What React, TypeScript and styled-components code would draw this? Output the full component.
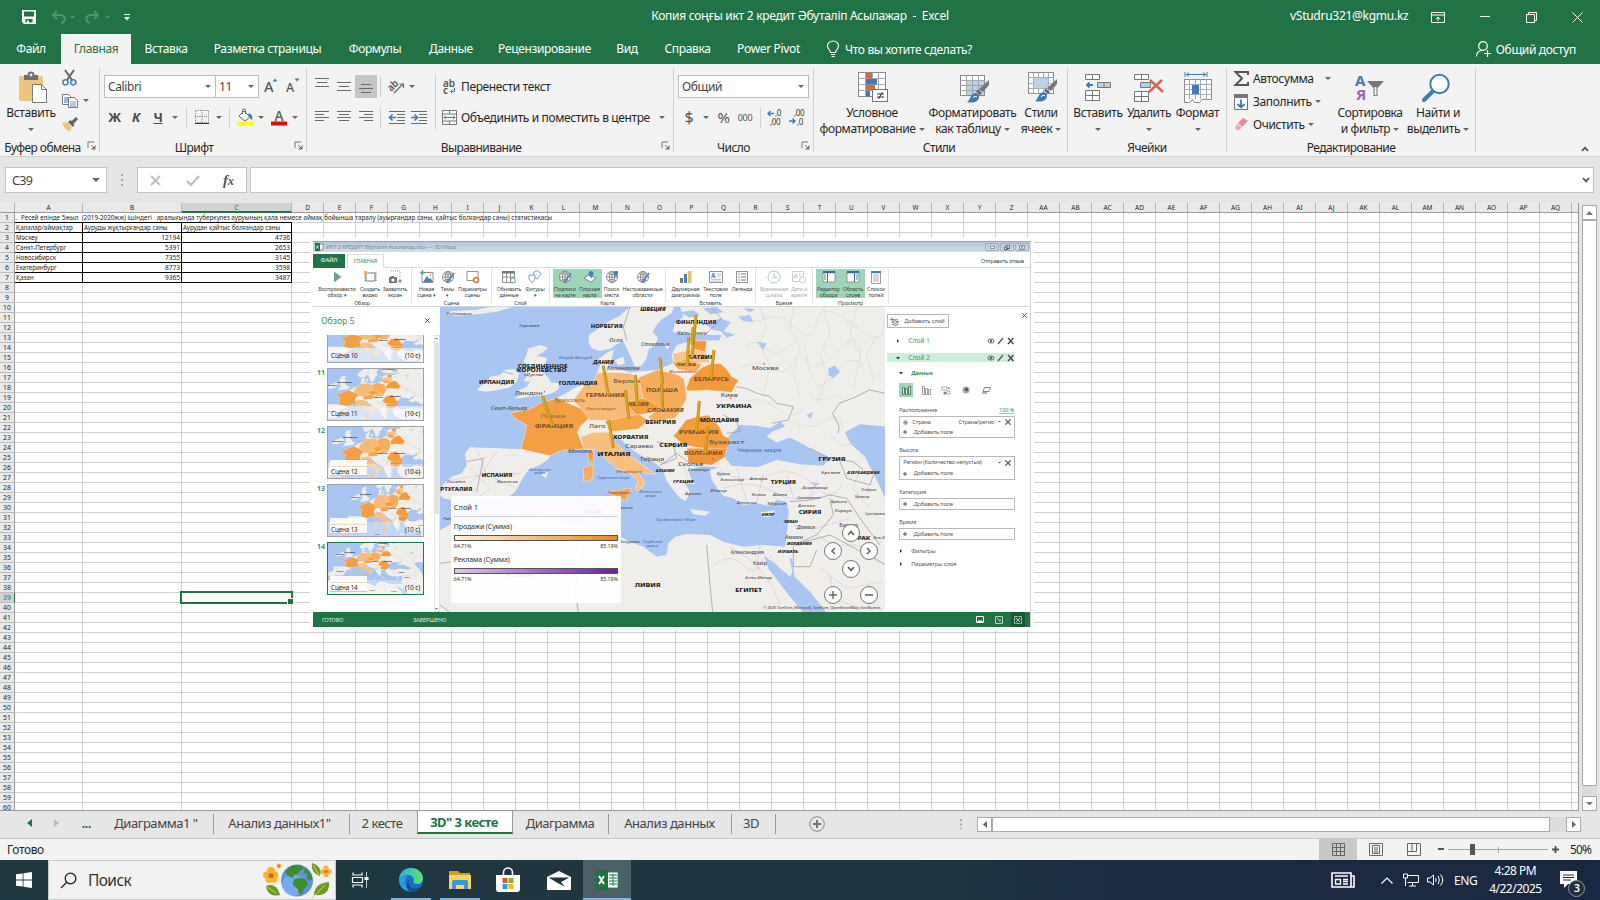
import React from "react";
import styled, { createGlobalStyle, css } from "styled-components";

const GREEN = "#217346";
const INK = "#262626";
const GREY = "#6a6a6a";
const BLUE = "#3f7ab5";
const LINE = "#d0d0d0";

const Global = createGlobalStyle`
  * { box-sizing: border-box; }
  html, body { margin: 0; padding: 0; overflow: hidden; }
  body { font-family: "Noto Sans", "Open Sans", sans-serif; font-size: 12px; color: ${INK}; letter-spacing: -0.38px; }
  svg { display: block; flex: none; overflow: visible; }
`;

const Screen = styled.div`
  width: 1600px;
  height: 900px;
  display: flex;
  flex-direction: column;
  background: #e6e6e6;
  overflow: hidden;
  white-space: nowrap;
`;

/* ---------- title bar and tabs ---------- */

const TitleBar = styled.header`
  height: 34px;
  background: ${GREEN};
  color: #fff;
  display: flex;
  align-items: center;
`;
const QuickBar = styled.div`
  width: 650px;
  padding-left: 22px;
  display: flex;
  align-items: center;
`;
const TitleText = styled.div<{ $w: number; $mr?: number }>`
  width: ${(p) => p.$w}px;
  margin-right: ${(p) => p.$mr ?? 0}px;
  text-align: center;
  line-height: 32px;
  height: 34px;
  letter-spacing: -0.27px;
`;
const WinIcons = styled.div`
  flex: 1;
  display: flex;
  align-items: center;
  height: 30px;
`;
const Gap = styled.span<{ $w: number }>`
  flex: none;
  width: ${(p) => p.$w}px;
`;
const TabBar = styled.nav`
  height: 30px;
  background: ${GREEN};
  color: #fff;
  display: flex;
  align-items: stretch;
  letter-spacing: -0.35px;
`;
const Tab = styled.div<{ $w: number; $on?: boolean }>`
  width: ${(p) => p.$w}px;
  flex: none;
  text-align: center;
  line-height: 30px;
  ${(p) => p.$on && css`background: #f3f3f3; color: ${GREEN};`}
`;
const Tell = styled.div`
  display: flex;
  align-items: center;
  gap: 6px;
  padding-left: 14px;
  flex: 1;
`;
const Share = styled.div`
  display: flex;
  align-items: center;
  gap: 5px;
  padding-right: 24px;
`;

/* ---------- ribbon ---------- */

const Ribbon = styled.section`
  height: 93px;
  background: #f3f3f3;
  border-bottom: 1px solid #d0d0d0;
  display: flex;
  align-items: flex-start;
`;
const Group = styled.div<{ $w: number }>`
  width: ${(p) => p.$w}px;
  flex: none;
  height: 84px;
  margin-top: 4px;
  border-right: 1px solid #d2d2d2;
  display: flex;
  flex-direction: column;
`;
const GroupBody = styled.div`
  height: 70px;
  display: flex;
`;
const GroupFoot = styled.div`
  height: 14px;
  display: flex;
  align-items: center;
  padding-right: 3px;
`;
const GroupName = styled.div<{ $shift?: number }>`
  flex: 1;
  display: flex;
  justify-content: center;
  line-height: 18px;
  padding-top: 6px;
  margin-left: ${(p) => p.$shift ?? 0}px;
  letter-spacing: -0.55px;
`;
const Big = styled.div<{ $w: number; $ml?: number }>`
  width: ${(p) => p.$w}px;
  margin-left: ${(p) => p.$ml ?? 0}px;
  flex: none;
  display: flex;
  flex-direction: column;
  align-items: center;
  padding-top: 3px;
`;
const BigIcon = styled.div<{ $shift?: number }>`
  height: 32px;
  margin: 0 0 2px ${(p) => (p.$shift ?? 0) * 2}px;
  display: flex;
  align-items: center;
`;
const BigLine = styled.div`
  height: 16px;
  line-height: 18px;
  display: flex;
  align-items: center;
  gap: 3px;
`;
const Stack = styled.div<{ $w: number; $pt?: number; $pl?: number }>`
  width: ${(p) => p.$w}px;
  flex: none;
  padding-top: ${(p) => p.$pt ?? 7}px;
  padding-left: ${(p) => p.$pl ?? 0}px;
`;
const ToolRow = styled.div<{ $h: number }>`
  height: ${(p) => p.$h}px;
  display: flex;
  align-items: center;
`;
const Tool = styled.div<{ $w: number; $on?: boolean }>`
  width: ${(p) => p.$w}px;
  height: 23px;
  flex: none;
  display: flex;
  align-items: center;
  justify-content: center;
  ${(p) => p.$on && css`background: #c5c5c5;`}
`;
const Combo = styled.div<{ $w: number }>`
  width: ${(p) => p.$w}px;
  height: 23px;
  flex: none;
  margin-right: -1px;
  background: #fff;
  border: 1px solid #bdbdbd;
  display: flex;
  align-items: center;
  justify-content: space-between;
  padding: 0 4px 0 3px;
  color: #444;
`;
const Rule = styled.i<{ $h: number }>`
  width: 1px;
  height: ${(p) => p.$h}px;
  background: #d2d2d2;
  flex: none;
`;
const Letter = styled.span<{ $kind?: "b" | "i" | "u" }>`
  font-weight: 700;
  font-size: 13px;
  color: #4a4a4a;
  font-style: ${(p) => (p.$kind === "i" ? "italic" : "normal")};
  text-decoration: ${(p) => (p.$kind === "u" ? "underline" : "none")};
`;
const Digits = styled.span<{ $size: number }>`
  font-size: ${(p) => p.$size}px;
  color: #555;
`;
const Collapse = styled.div`
  flex: 1;
  display: flex;
  justify-content: flex-end;
  padding: 82px 11px 0 0;
`;

/* ---------- formula bar ---------- */

const FormulaBar = styled.div`
  height: 46px;
  padding: 10px 6px 0 5px;
  display: flex;
  align-items: flex-start;
`;
const Box = styled.div<{ $w?: number }>`
  ${(p) => (p.$w ? `width: ${p.$w}px;` : "flex: 1;")}
  height: 26px;
  background: #fff;
  border: 1px solid #c3c3c3;
  display: flex;
  align-items: center;
  color: #444;
`;
const NameText = styled.span`
  flex: 1;
  padding-left: 6px;
  font-size: 12.5px;
  letter-spacing: -0.6px;
`;
const Fx = styled.span`
  font: italic 700 15px "Liberation Serif", serif;
  color: #555;
`;
const BoxEnd = styled.div`
  margin-left: auto;
  padding-right: 3px;
`;

/* ---------- sheet ---------- */

const SheetArea = styled.main`
  height: 608px;
  display: flex;
  position: relative;
`;
const Sheet = styled.div`
  width: 1579px;
  height: 608px;
  overflow: hidden;
  border-right: 1px solid #9a9a9a;
  border-bottom: 1px solid #9a9a9a;
`;
const HeadRow = styled.div`
  height: 10px;
  display: flex;
  background: #e9e9e9;
  border-bottom: 1px solid #9c9c9c;
`;
const ColHead = styled.div<{ $w: number; $on?: boolean }>`
  width: ${(p) => p.$w}px;
  flex: none;
  border-right: 1px solid #b5b5b5;
  font-size: 6.5px;
  line-height: 10px;
  height: ${(p) => (p.$on ? 10 : 9)}px;
  letter-spacing: 0;
  text-align: center;
  ${(p) => p.$on && css`background: #d2d2d2; color: ${GREEN}; border-bottom: 2px solid ${GREEN};`}
`;
const Row = styled.div`
  height: 10px;
  display: flex;
`;
const RowHead = styled.div<{ $on?: boolean }>`
  width: 15px;
  flex: none;
  border-right: 1px solid ${(p) => (p.$on ? GREEN : "#9c9c9c")};
  border-bottom: 1px solid #bdbdbd;
  background: ${(p) => (p.$on ? "#d2d2d2" : "#e9e9e9")};
  color: ${(p) => (p.$on ? GREEN : INK)};
  font-size: 6.8px;
  line-height: 9px;
  letter-spacing: 0;
  text-align: center;
`;
const Cell = styled.div<{ $w: number; $dark?: boolean; $num?: boolean }>`
  width: ${(p) => p.$w}px;
  flex: none;
  background: #fff;
  border-right: 1px solid ${(p) => (p.$dark ? "#000" : LINE)};
  border-bottom: 1px solid ${(p) => (p.$dark ? "#000" : LINE)};
  font-size: ${(p) => (p.$num ? 6.6 : 6.2)}px;
  line-height: 9px;
  letter-spacing: 0;
  text-align: ${(p) => (p.$num ? "right" : "left")};
  padding: 0 1px;
  white-space: pre;
`;
const Rest = styled.div`
  flex: 1;
  border-bottom: 1px solid ${LINE};
  background: repeating-linear-gradient(90deg, #fff 0 31px, ${LINE} 31px 32px);
`;
const Overflow = styled.div`
  width: 277px;
  flex: none;
  overflow: visible;
  background: #fff;
  border-bottom: 1px solid #000;
  padding-left: 1px;
  line-height: 9px;
  letter-spacing: -0.01px;
  white-space: pre;
  font-size: 6.3px;
`;
const HeadingText = styled.span`
  position: relative;
  z-index: 1;
`;
const Selection = styled.div`
  position: absolute;
  left: 180px;
  top: 388px;
  width: 113px;
  height: 13px;
  border: 2px solid ${GREEN};
  &::after {
    content: "";
    position: absolute;
    right: -3px;
    bottom: -3px;
    width: 5px;
    height: 5px;
    background: ${GREEN};
    border: 1px solid #fff;
    box-sizing: content-box;
  }
`;
const VScroll = styled.div`
  width: 15px;
  margin: 2px 0 0 3px;
  height: 606px;
  background: #dcdcdc;
  display: flex;
  flex-direction: column;
`;
const ScrollKey = styled.div`
  width: 15px;
  height: 15px;
  flex: none;
  background: #fff;
  border: 1px solid #ababab;
  display: flex;
  align-items: center;
  justify-content: center;
`;
const VThumb = styled.div`
  height: 566px;
  background: #fff;
  border: 1px solid #ababab;
`;

/* ---------- floating 3D Maps window ---------- */

const Shot = styled.div`
  position: absolute;
  left: 310px;
  top: 35px;
  width: 724px;
  height: 392px;
  background: #fff;
  padding: 3px;
  letter-spacing: -0.12px;
`;
const ShotBody = styled.div`
  width: 718px;
  height: 386px;
  border-right: 1px solid #cdd5dc;
  display: flex;
  flex-direction: column;
  font-size: 5.7px;
  color: #444;
`;
const ShotTitle = styled.div`
  height: 11px;
  border-top: 1px solid #98a3ae;
  background: linear-gradient(#b4c6d8, #cfdeed);
  display: flex;
  align-items: center;
  padding-left: 2px;
  color: #8492a0;
  font-size: 5.6px;
`;
const ShotWinBtn = styled.div`
  width: 14px;
  height: 8px;
  margin-right: 1px;
  border: 1px solid #9fb0c2;
  border-radius: 1px;
  display: flex;
  align-items: center;
  justify-content: center;
`;
const ShotTabs = styled.div`
  height: 16px;
  padding-top: 2px;
  display: flex;
  border-bottom: 1px solid #dcdcdc;
  line-height: 13px;
`;
const ShotTab = styled.div<{ $file?: boolean }>`
  width: ${(p) => (p.$file ? 32 : 37)}px;
  margin-right: 2px;
  height: 14px;
  text-align: center;
  font-size: ${(p) => (p.$file ? 6 : 5.4)}px;
  ${(p) =>
    p.$file
      ? css`background: ${GREEN}; color: #fff;`
      : css`background: #fff; color: #3c8a60; border: 1px solid #dcdcdc; border-bottom: none;`}
`;
const ShotFeedback = styled.div`
  margin-left: auto;
  padding: 1px 6px 0 0;
  font-size: 5.4px;
`;
const ShotRibbon = styled.div`
  height: 39px;
  display: flex;
  border-bottom: 1px solid #d5d5d5;
  font-size: 5.4px;
  letter-spacing: -0.15px;
`;
const ShotGroup = styled.div<{ $w: number }>`
  width: ${(p) => p.$w}px;
  flex: none;
  height: 34px;
  margin-top: 1px;
  border-right: 1px solid #e2e2e2;
`;
const ShotGroupItems = styled.div<{ $pl: number }>`
  display: flex;
  height: 29px;
  padding-left: ${(p) => p.$pl}px;
`;
const ShotItem = styled.div<{ $w: number; $on?: boolean; $dim?: boolean }>`
  width: ${(p) => p.$w}px;
  flex: none;
  display: flex;
  flex-direction: column;
  align-items: center;
  padding-top: 1px;
  line-height: 6px;
  text-align: center;
  white-space: pre;
  opacity: ${(p) => (p.$dim ? 0.45 : 1)};
  ${(p) => p.$on && css`background: #9fd5b7;`}
  svg { margin-bottom: 2px; }
`;
const ShotGroupName = styled.div`
  text-align: center;
  line-height: 9px;
  height: 9px;
  padding-top: 1px;
`;
const ShotMain = styled.div`
  height: 305px;
  display: flex;
`;
const TourPane = styled.div`
  width: 127px;
  height: 305px;
  display: flex;
  flex-direction: column;
`;
const TourHead = styled.div`
  height: 28px;
  padding: 5px 10px 0 8px;
  display: flex;
  justify-content: space-between;
  font-size: 8.8px;
  line-height: 18px;
  color: #3f9469;
`;
const TourClose = styled.div`
  padding-top: 6px;
`;
const TourBody = styled.div`
  flex: 1;
  display: flex;
  justify-content: space-between;
  overflow: hidden;
`;
const SceneList = styled.div`
  width: 112px;
  display: flex;
  flex-direction: column;
  justify-content: flex-end;
  gap: 5px;
  padding-bottom: 17px;
`;
const SceneRow = styled.div`
  display: flex;
  height: 53px;
  flex: none;
`;
const SceneNo = styled.div`
  width: 14px;
  text-align: center;
  padding-left: 2px;
  font-size: 7px;
  font-weight: 700;
  line-height: 10px;
  color: #3f9469;
`;
const SceneThumb = styled.div<{ $on?: boolean }>`
  width: 97px;
  height: 53px;
  position: relative;
  border: 1px solid ${(p) => (p.$on ? "#1f7a4a" : "#a2a2a2")};
  outline: ${(p) => (p.$on ? "1px solid #1f7a4a" : "none")};
  outline-offset: -1px;
  overflow: hidden;
`;
const SceneLegend = styled.div`
  position: absolute;
  left: 2px;
  bottom: 2px;
  width: 37px;
  height: 16px;
  background: linear-gradient(#fff 6px, #f2c48e 6px 7px, #fff 7px);
  border-bottom: 1px solid #b9a0cc;
  opacity: 0.92;
`;
const SceneCaption = styled.div<{ $haze?: boolean }>`
  position: absolute;
  left: 0;
  right: 0;
  bottom: 0;
  height: 14px;
  padding: 0 3px;
  display: flex;
  justify-content: space-between;
  align-items: center;
  font-size: 6.3px;
  color: #222;
  background: rgba(255, 255, 255, ${(p) => (p.$haze ? 0.55 : 0.3)});
`;
const TourScroll = styled.div`
  width: 6px;
  height: 277px;
  background: #fff;
  border: 1px solid #e0e0e0;
  display: flex;
  flex-direction: column;
  justify-content: space-between;
  align-items: center;
  padding: 2px 0;
`;
const TourTrack = styled.div`
  width: 6px;
  flex: 1;
  margin: 2px 0 94px;
  background: #e4e4e4;
`;
const MapPane = styled.div`
  width: 446px;
  height: 305px;
  position: relative;
  overflow: hidden;
`;
const Legend = styled.div`
  position: absolute;
  left: 11px;
  top: 189px;
  width: 170px;
  height: 107px;
  padding: 5px 3px 0;
  background: rgba(255, 255, 255, 0.93);
  color: #333;
`;
const LegendTitle = styled.div`
  height: 16px;
  font-size: 7.6px;
  line-height: 12px;
  border-bottom: 1px solid #d0d0d0;
  margin-bottom: 4px;
`;
const LegendName = styled.div`
  font-size: 7px;
  line-height: 12px;
  height: 14px;
`;
const LegendBar = styled.div<{ $from: string; $to: string }>`
  height: 6px;
  border: 1px solid #555;
  background: linear-gradient(90deg, ${(p) => p.$from}, ${(p) => p.$to});
`;
const LegendScale = styled.div`
  display: flex;
  justify-content: space-between;
  font-size: 5.4px;
  line-height: 10px;
  height: 13px;
`;
const Nav = styled.div<{ $x: number; $y: number }>`
  position: absolute;
  left: ${(p) => p.$x}px;
  top: ${(p) => p.$y}px;
  width: 18px;
  height: 18px;
  border-radius: 50%;
  border: 1px solid #777;
  background: #fff;
  display: flex;
  align-items: center;
  justify-content: center;
`;
const Credit = styled.div`
  position: absolute;
  right: 5px;
  bottom: 1px;
  font-size: 4px;
  line-height: 7px;
  color: #333;
`;
const LayerPane = styled.div`
  width: 145px;
  padding: 6px 3px 0 2px;
  font-size: 5.8px;
  color: #555;
`;
const LayerTop = styled.div`
  display: flex;
  justify-content: space-between;
  height: 23px;
`;
const AddLayer = styled.div`
  width: 62px;
  height: 14px;
  margin-top: 1px;
  border: 1px solid #b5b5b5;
  display: flex;
  align-items: center;
  gap: 5px;
  padding-left: 2px;
`;
const LayerRow = styled.div<{ $on?: boolean }>`
  width: 127px;
  height: 9px;
  margin-bottom: 8px;
  padding: 0 0 0 9px;
  display: flex;
  align-items: center;
  gap: 2px;
  background: ${(p) => (p.$on ? "#cdeedd" : "transparent")};
`;
const LayerName = styled.span`
  flex: 1;
  padding-left: 6px;
  font-size: 6.8px;
  color: #4a9c74;
`;
const SubHead = styled.div<{ $green?: boolean; $mb?: number }>`
  height: 9px;
  margin: ${(p) => (p.$green ? -2 : 0)}px 0 ${(p) => p.$mb ?? 4}px;
  padding-left: 12px;
  display: flex;
  align-items: center;
  gap: 8px;
  ${(p) => p.$green && css`color: #2a9461; font-weight: 700; font-size: 5.4px;`}
`;
const ShapeRow = styled.div`
  display: flex;
  gap: 6px;
  padding-left: 12px;
  height: 14px;
  margin-bottom: 9px;
`;
const ShapeBtn = styled.div<{ $on?: boolean }>`
  width: 14px;
  height: 14px;
  display: flex;
  align-items: center;
  justify-content: center;
  ${(p) => p.$on && css`background: #9fd5b7;`}
`;
const FieldName = styled.div`
  width: 127px;
  padding-left: 12px;
  height: 10px;
  line-height: 9px;
  display: flex;
  justify-content: space-between;
  font-size: 5.6px;
  a { color: #2c79bd; border-bottom: 1px solid #9bc0e0; height: 8px; }
`;
const FieldBox = styled.div<{ $h: number; $mb: number }>`
  width: 116px;
  height: ${(p) => p.$h}px;
  margin: 0 0 ${(p) => p.$mb}px 12px;
  border: 1px solid #b9b9b9;
  display: flex;
  flex-direction: column;
  justify-content: space-around;
  font-size: 5.6px;
`;
const FieldRow = styled.div`
  display: flex;
  align-items: center;
  gap: 4px;
  padding: 0 3px;
  line-height: 9px;
`;
const Grow = styled.span`
  flex: 1;
`;
const ShotStatus = styled.div`
  height: 15px;
  background: ${GREEN};
  color: #e6f1ea;
  display: flex;
  align-items: center;
  padding-left: 9px;
  font-size: 5.6px;
`;
const StatusWord = styled.span<{ $w: number }>`
  width: ${(p) => p.$w}px;
`;
const StatusKey = styled.div<{ $on?: boolean }>`
  width: 14px;
  height: 15px;
  margin-right: 5px;
  display: flex;
  align-items: center;
  justify-content: center;
  background: ${(p) => (p.$on ? "#175a35" : "transparent")};
`;

/* ---------- sheet tabs, status bar ---------- */

const SheetTabs = styled.div`
  height: 28px;
  border-bottom: 1px solid #c6c6c6;
  display: flex;
  align-items: flex-start;
  font-size: 13px;
  letter-spacing: -0.46px;
  color: #444;
`;
const SheetNav = styled.div`
  width: 101px;
  height: 27px;
  padding: 0 10px 3px 27px;
  display: flex;
  align-items: center;
  justify-content: space-between;
  color: ${GREEN};
  font-weight: 700;
`;
const SheetTab = styled.div<{ $w: number; $on?: boolean; $bare?: boolean; $trim?: number }>`
  width: ${(p) => p.$w}px;
  flex: none;
  text-align: center;
  padding-right: ${(p) => p.$trim ?? 2}px;
  ${(p) =>
    p.$on
      ? css`
          height: 24px;
          line-height: 25px;
          background: #fff;
          color: ${GREEN};
          font-weight: 700;
          letter-spacing: -0.55px;
          border: solid #9a9a9a;
          border-width: 0 1px;
          border-bottom: 2px solid ${GREEN};
          margin-top: -1px;
        `
      : css`
          height: 20px;
          line-height: 19px;
          margin-top: 3px;
          border-right: 1px solid ${p.$bare ? "transparent" : "#9a9a9a"};
        `}
`;
const HScroll = styled.div`
  height: 15px;
  margin-top: 6px;
  width: 604px;
  background: #dcdcdc;
  display: flex;
`;
const HThumb = styled.div`
  width: 558px;
  height: 15px;
  background: #fff;
  border: 1px solid #ababab;
`;
const TabCenter = styled.div<{ $w: number; $pl?: number }>`
  width: ${(p) => p.$w}px;
  height: 26px;
  padding-left: ${(p) => p.$pl ?? 0}px;
  display: flex;
  align-items: center;
`;
const StatusBar = styled.footer`
  height: 21px;
  background: #f3f3f3;
  display: flex;
  align-items: center;
  padding: 0 2px 1px 7px;
`;
const ViewBtn = styled.div<{ $on?: boolean; $w: number }>`
  width: ${(p) => p.$w}px;
  height: 21px;
  margin-bottom: -1px;
  display: flex;
  align-items: center;
  justify-content: center;
  background: ${(p) => (p.$on ? "#c8c8c8" : "transparent")};
`;
const Percent = styled.span`
  width: 28px;
  letter-spacing: -0.85px;
`;

/* ---------- taskbar ---------- */

const TaskBar = styled.div`
  height: 40px;
  background: linear-gradient(90deg, #1f3840 0%, #20363f 55%, #1b2c42 70%, #1a2740 100%);
  display: flex;
  color: #fff;
`;
const TaskBtn = styled.div<{ $w: number; $open?: boolean; $active?: boolean }>`
  width: ${(p) => p.$w}px;
  flex: none;
  height: 40px;
  display: flex;
  align-items: center;
  justify-content: center;
  background: ${(p) => (p.$active ? "#4c6067" : "transparent")};
  ${(p) =>
    (p.$open || p.$active) &&
    css`
      background-image: linear-gradient(#76b9ed, #76b9ed);
      background-repeat: no-repeat;
      background-position: center bottom;
      background-size: ${p.$active ? 48 : 40}px 2px;
    `}
`;
const Search = styled.div`
  width: 288px;
  background: #f2f2f2;
  border: 1px solid #c5c9cb;
  display: flex;
  align-items: center;
  padding-left: 11px;
  font-size: 15.5px;
  letter-spacing: -0.6px;
  color: #333;
`;
const SearchWord = styled.span`
  flex: 1;
  padding-left: 11px;
`;
const Clock = styled.div`
  width: 66px;
  text-align: center;
  line-height: 18px;
  padding-right: 2px;
  letter-spacing: -0.5px;
`;
const Tray = styled.div`
  flex: 1;
  display: flex;
  align-items: center;
`;
const Notice = styled.div`
  position: relative;
  width: 17px;
  height: 17px;
  margin-top: -2px;
`;
const Badge = styled.div`
  position: absolute;
  right: -8px;
  bottom: -9px;
  width: 17px;
  height: 17px;
  border-radius: 50%;
  border: 1px solid #8d97a3;
  background: #252f3a;
  font-size: 10.5px;
  font-weight: 600;
  line-height: 15px;
  text-align: center;
`;

/* ---------- small icons ---------- */

const Caret = ({ c = "#666", w = 6 }: { c?: string; w?: number }) => (
  <svg width={w} height={w / 2} viewBox="0 0 6 3"><path d="M0 0h6L3 3z" fill={c} /></svg>
);
const Chevron = ({ up, c = "#555" }: { up?: boolean; c?: string }) => (
  <svg width="8" height="6" viewBox="0 0 8 6"><path d={up ? "M1 5l3-3.400L7 5" : "M1 1l3 3.400L7 1"} fill="none" stroke={c} strokeWidth="1.800" /></svg>
);
const Launcher = () => (
  <svg width="9" height="9" viewBox="0 0 9 9"><path d="M1 7V1h6" fill="none" stroke="#777" /><path d="M4 4l3 3" stroke="#777" /><path d="M8.500 4v4.500H4z" fill="#777" /></svg>
);
const Lines = ({ rows, w = 14, h = 13 }: { rows: [number, number, number][]; w?: number; h?: number }) => (
  <svg width={w} height={h}>{rows.map(([x, y, l], i) => <rect key={i} x={x} y={y} width={l} height="1" fill={GREY} />)}</svg>
);
const SaveIcon = () => (
  <svg width="14" height="14" viewBox="0 0 14 14"><path d="M0 0h14v14H2l-2-2z" fill="#fff" /><path d="M2 1.500h10v5H2zM3.500 9h7v3.500h-7z" fill={GREEN} /><path d="M5 10.500h2V13H5z" fill="#fff" /></svg>
);
const Undo = ({ flip }: { flip?: boolean }) => (
  <svg width="15" height="14" viewBox="0 0 15 14"><g transform={flip ? "matrix(-1 0 0 1 15 0)" : undefined} fill="none" stroke="#4f9470" strokeWidth="2"><path d="M6 1L2 5l4 4M2 5h7c6 0 6 7 1 8" /></g></svg>
);
const PasteIcon = () => (
  <svg width="29" height="31" viewBox="0 0 29 31">
    <rect x="1" y="4" width="24" height="25" rx="1.500" fill="#ecc57f" />
    <path d="M6 3h3.500a3.500 3.500 0 0 1 7 0H20v5H6z" fill="#707070" /><circle cx="13" cy="3" r="1.400" fill="#f3f3f3" />
    <path d="M14.500 12.500h9l5 5v13h-14z" fill="#fff" stroke="#777" /><path d="M23.500 12.500v5h5" fill="none" stroke="#777" />
  </svg>
);
const Scissors = () => (
  <svg width="15" height="16" viewBox="0 0 15 16"><path d="M3 0l7 10M12 0L5 10" stroke="#666" strokeWidth="2" /><circle cx="3.500" cy="12.300" r="2.600" fill="none" stroke={BLUE} strokeWidth="1.400" /><circle cx="11.300" cy="12.300" r="2.600" fill="none" stroke={BLUE} strokeWidth="1.400" /></svg>
);
const CopyIcon = () => (
  <svg width="16" height="14" viewBox="0 0 16 14"><path d="M.5.5h6l2 2v8h-8z" fill="#fff" stroke="#777" /><path d="M2 4h4M2 6h4M2 8h4" stroke={BLUE} /><path d="M6.500 3.500h6l3 3v7h-9z" fill="#fff" stroke="#777" /><path d="M8 8h6M8 10h6M8 12h6" stroke={BLUE} strokeWidth=".8" /></svg>
);
const Painter = () => (
  <svg width="16" height="15" viewBox="0 0 16 15"><path d="M0 7l5-1 5 5-2 4c-3 0-6-3-8-8z" fill="#ecc57f" /><path d="M6 6l5 5 1.500-2-1-1L16 3l-2-2-4.500 4-1-1z" fill="#666" /></svg>
);
const FontSize = ({ up }: { up?: boolean }) => (
  <svg width="14" height="19" viewBox="0 0 14 19"><text x="0" y="14.500" fontSize={up ? 14.5 : 12.5} letterSpacing="0" fontWeight="500" fill="#555">A</text><path d={up ? "M8.500 4.500l2.500-3 2.500 3z" : "M8.500 1.500h5l-2.500 3z"} fill={BLUE} /></svg>
);
const BordersIcon = () => (
  <svg width="14" height="14" viewBox="0 0 14 14"><path d="M.5.5h13v12H.5zM7 0v13M0 6.500h13" fill="none" stroke="#777" strokeDasharray="1 1.200" /><path d="M0 13.500h14" stroke="#333" /></svg>
);
const FillIcon = () => (
  <svg width="17" height="17" viewBox="0 0 17 17"><path d="M7 2l6 6-5 4-6-5z" fill="#fff" stroke="#666" /><path d="M5.500 5V1.500a1.500 1.500 0 0 1 3 0V5" fill="none" stroke="#666" /><path d="M11 4.500c4 0 5 3 4 7-1-2-2-3-3-3z" fill={BLUE} /><rect y="12.500" width="16" height="4" fill="#ff0" /></svg>
);
const FontColor = () => (
  <svg width="16" height="17" viewBox="0 0 16 17"><text x="8" y="11.500" textAnchor="middle" fontSize="13.500" letterSpacing="0" fontWeight="600" fill="#666">A</text><rect y="12.500" width="16" height="4" fill="#e00b0b" /></svg>
);
const Orient = () => (
  <svg width="16" height="15" viewBox="0 0 16 15"><text x="0" y="0" fontSize="10.500" letterSpacing="0" fontWeight="600" fill="#555" transform="translate(2 9) rotate(-45) scale(.9 1) translate(-3 3)">ab</text><path d="M5 14L14 5M10.500 5H14.500V9" fill="none" stroke="#666" strokeWidth="1.200" /></svg>
);
const WrapIcon = () => (
  <svg width="13" height="16" viewBox="0 0 13 16"><text x="0" y="7.500" fontSize="10" letterSpacing="0" fontWeight="600" fill="#555">ab</text><text x="0" y="15" fontSize="10" letterSpacing="0" fontWeight="600" fill="#555">c</text><path d="M11.500 9v3.500H7.500M9.500 10.500l-2 2 2 2" fill="none" stroke={BLUE} /></svg>
);
const MergeIcon = () => (
  <svg width="15" height="15" viewBox="0 0 15 15"><path d="M.5.5h14v14H.5zM.5 4h14M.5 11h14M7.500.5V4M7.500 11v3.500" fill="#fff" stroke="#777" /><path d="M2 7.500h11M4 5.500l-2 2 2 2M11 5.500l2 2-2 2" fill="none" stroke={BLUE} /></svg>
);
const Indent = ({ right }: { right?: boolean }) => (
  <svg width="16" height="13" viewBox="0 0 16 13"><path d="M0 .5h16M8 3.500h8M8 6.500h8M8 9.500h8M0 12.500h16" stroke={GREY} /><path d={right ? "M0 6.500h6M3.500 3.500l3 3-3 3" : "M7 6.500H1M3.500 3.500l-3 3 3 3"} fill="none" stroke={BLUE} strokeWidth="1.700" /></svg>
);
const Decimal = ({ more }: { more?: boolean }) => (
  <svg width="16" height="15" viewBox="0 0 16 15" fontSize="8" fill="#333" letterSpacing="-0.300">
    <text x={more ? 8 : 5} y="6">{more ? ",0" : ",00"}</text><text x={more ? 3 : 8} y="14.500">{more ? ",00" : ",0"}</text>
    <path d={more ? "M7 3.500H1M3.500 1L1 3.500 3.500 6" : "M0 11h6M3.500 8.500L6 11l-2.500 2.500"} fill="none" stroke={BLUE} strokeWidth="1.400" />
  </svg>
);
const TableGrid = ({ w, h, cols, rows }: { w: number; h: number; cols: number; rows: number }) => (
  <g fill="#fff" stroke="#8a8a8a">
    <rect x=".5" y=".5" width={w} height={h} />
    {Array.from({ length: cols - 1 }, (_, i) => <path key={"c" + i} d={`M${Math.round(((i + 1) * w) / cols) + 0.5} .5v${h}`} stroke="#aaa" />)}
    {Array.from({ length: rows - 1 }, (_, i) => <path key={"r" + i} d={`M.5 ${Math.round(((i + 1) * h) / rows) + 0.5}h${w}`} stroke="#aaa" />)}
  </g>
);
const BrushTip = ({ x, y }: { x: number; y: number }) => (
  <g transform={`translate(${x} ${y})`}><path d="M22 0v5l-6 7-4-3z" fill="#777" /><path d="M11 9.500l4 3.500-2 2-4-3.500z" fill="#666" /><path d="M0 22c3-1 3-8 8-9 4 0 5 4 3 7-3 3-7 3-11 2z" fill={BLUE} /><path d="M6 18c1-2 3-2 4-1" stroke="#fff" fill="none" /></g>
);
const CondIcon = () => (
  <svg width="31" height="31" viewBox="0 0 31 31"><TableGrid w={27} h={24} cols={4} rows={4} /><rect x="8" y="1" width="6" height="5.500" fill="#d6654a" /><rect x="8" y="7" width="11" height="5.500" fill={BLUE} /><rect x="8" y="13" width="9" height="5.500" fill="#d6654a" /><rect x="8" y="19" width="4" height="5.500" fill={BLUE} /><rect x="14.500" y="17.500" width="15" height="12" fill="#fff" stroke="#777" /><path d="M19 22h7M19 25h7M24.500 20l-4 7" stroke="#333" /></svg>
);
const TableIcon = () => (
  <svg width="30" height="31" viewBox="0 0 30 31"><g transform="translate(0 3)"><TableGrid w={24} h={20} cols={4} rows={4} /><rect x="7" y="6" width="17" height="14" fill="#7f9fc4" opacity=".5" /></g><BrushTip x={7} y={8} /></svg>
);
const StyleIcon = () => (
  <svg width="30" height="31" viewBox="0 0 30 31"><TableGrid w={25} h={21} cols={5} rows={4} /><rect x="5.500" y="5.500" width="15" height="11" fill="#bfd0e6" stroke="#9ab0cc" /><BrushTip x={7} y={7} /></svg>
);
const InsertIcon = () => (
  <svg width="27" height="29" viewBox="0 0 27 29" fill="#fff" stroke="#777"><path d="M.5 1.500h14v5H.500zM7.500 1.500v5M.5 17.500h14v10H.5zM7.500 17.500v10M.5 22.500h14" /><path d="M12.500 9.500h13v5h-13zM19 9.500v5" fill="#bdd0e0" /><path d="M8 12H2M4.500 9.500L2 12l2.500 2.500" fill="none" stroke={BLUE} strokeWidth="1.800" /></svg>
);
const DeleteIcon = () => (
  <svg width="30" height="29" viewBox="0 0 30 29" fill="#fff" stroke="#777"><path d="M.5 1.500h14v5H.500zM7.500 1.500v5M.5 18.500h14v10H.5zM7.500 18.500v10M.5 23.500h14" /><path d="M6.500 9.500h10v5h-10z" fill="#bdd0e0" /><path d="M16 7l13 12M28 7L15 19" fill="none" stroke="#d6654a" strokeWidth="2.400" /></svg>
);
const FormatIcon = () => (
  <svg width="28" height="31" viewBox="0 0 28 31"><path d="M1 0v5M23 0v5M2 2.500h20M5 .500L2.500 2.500 5 4.500M19 .500l2.500 2-2.500 2" fill="none" stroke={BLUE} /><g transform="translate(0 7)"><TableGrid w={27} h={20} cols={5} rows={4} /></g><rect x="8" y="13" width="7" height="9" fill={BLUE} /><path d="M.5 27v3.500h5l3-3 2 3h5l3-3.500" fill="#fff" stroke="#888" /></svg>
);
const Sigma = () => (
  <svg width="15" height="15" viewBox="0 0 15 15"><path d="M14 4V1H1.500L8 7.500 1.500 14H14v-3" fill="none" stroke="#555" strokeWidth="2" /></svg>
);
const FillDown = () => (
  <svg width="14" height="16" viewBox="0 0 14 16"><rect x=".5" y=".5" width="13" height="15" fill="#fff" stroke="#777" /><rect width="14" height="4" fill="#777" /><path d="M7 5.500v8M3.500 10L7 13.500 10.500 10" fill="none" stroke={BLUE} strokeWidth="1.800" /></svg>
);
const Eraser = () => (
  <svg width="13" height="13" viewBox="0 0 13 13"><path d="M8 0l5 3-6 6-4-4z" fill="#e08a9a" /><path d="M2.500 6l4 3.500L4.500 12H1L0 9z" fill="#e9aab6" /></svg>
);
const SortIcon = () => (
  <svg width="30" height="28" viewBox="0 0 30 28"><text x="0" y="13" fontSize="15" letterSpacing="0" fontWeight="700" fill={BLUE}>А</text><text x="1" y="27" fontSize="15" letterSpacing="0" fontWeight="700" fill="#9a62b5">Я</text><path d="M12 8h17l-6.500 7v8h-4v-8z" fill="#777" /><path d="M19.500 14h2v8h-2z" fill="#f3f3f3" /></svg>
);
const FindIcon = () => (
  <svg width="28" height="29" viewBox="0 0 28 29"><path d="M2 27l9-9" stroke={BLUE} strokeWidth="4" strokeLinecap="round" /><circle cx="17.500" cy="11" r="9.200" fill="#fff" stroke={BLUE} strokeWidth="2" /></svg>
);

/* ---------- map drawing ---------- */

const SEA = "#a9c5f1";
const LAND = "#efeeea";

const lands = [
  "405,236 425,228 500,224 540,216 610,216 560,230 500,238 440,243",
  "655,340 690,330 714,338 700,352 680,362 712,368 705,388 690,398 700,412 718,432 722,442 748,445 746,462 728,474 706,480 660,485 612,492 640,474 622,468 650,455 660,440 640,438 655,418 640,410 652,388 640,380 648,362",
  "500,466 515,450 532,440 540,425 570,420 585,405 612,402 628,416 620,440 598,458 560,466 530,470",
  "835,322 838,298 860,285 890,262 925,245 960,216 1092,216 1085,235 1060,250 1040,270 1028,290 1045,310 1035,330 1015,345 1010,370 995,392 975,395 962,365 948,335 940,318 920,328 900,342 870,348 845,340",
  "1088,290 1095,265 1120,245 1110,216 1728,216 1728,1131 390,1131 390,885 430,865 700,850 932,905 960,920 1000,935 1040,965 1070,960 1075,925 1095,905 1130,897 1200,900 1240,920 1300,935 1360,930 1425,935 1432,880 1436,830 1430,800 1400,795 1375,812 1340,805 1300,810 1270,790 1240,782 1222,760 1205,735 1200,705 1230,697 1170,694 1135,705 1142,728 1155,748 1125,745 1140,770 1128,798 1110,790 1090,765 1070,738 1058,702 1030,680 990,660 960,640 935,615 915,600 905,612 950,655 1005,695 1038,718 985,712 1005,745 985,770 975,760 985,738 960,715 920,700 885,670 862,645 820,642 760,645 720,662 716,672 690,690 655,705 635,735 618,768 590,790 540,786 450,800 400,790 390,780 398,750 425,725 455,715 470,690 465,655 480,637 560,640 632,642 645,600 650,570 612,548 602,535 660,522 690,505 740,490 775,470 800,455 850,440 862,412 872,385 865,372 895,350 912,345 905,372 893,395 960,412 1040,405 1090,385 1085,360 1100,330 1145,318 1228,316 1235,300 1150,300",
  "820,698 850,688 848,733 822,740", "832,655 852,648 850,680 838,680", "890,772 965,760 945,796",
  "1140,822 1200,830 1185,842 1150,838", "1352,832 1395,826 1380,846 1360,846", "690,716 715,710 708,730",
  "915,375 940,365 945,385 925,392", "1060,325 1080,330 1072,345",
];
const waters = [
  "1242,665 1240,640 1255,605 1290,570 1340,572 1380,580 1412,560 1425,575 1385,590 1370,605 1400,622 1440,608 1480,628 1520,652 1560,668 1540,692 1470,688 1400,675 1340,697 1265,692",
  "1605,592 1650,568 1728,575 1728,795 1700,735 1665,665 1620,625",
  "1362,962 1390,982 1440,1025 1448,1010 1438,970 1446,972 1454,1025 1500,1070 1548,1131 1478,1131 1420,1060 1375,1000",
  "1190,270 1230,250 1262,262 1240,290 1210,285", "1285,245 1320,240 1330,262 1300,258", "1230,285 1275,300 1250,308",
  "1555,400 1575,392 1590,410 1570,430 1555,420", "1340,320 1370,325 1360,345", "1490,540 1510,530 1502,552",
  "1110,232 1150,226 1170,240 1140,248", "1500,740 1530,746 1515,752", "1180,220 1220,216 1240,232 1200,238", "1300,220 1335,222 1320,232",
];
const tinted: [string, string][] = [
  ["#f3a044", "602,535 660,522 690,505 740,490 800,515 832,530 835,552 812,572 802,592 822,642 760,645 720,662 632,642 645,600 650,570 612,548"],
  ["#f7bb79", "790,495 820,455 850,440 862,415 880,412 960,415 985,428 1000,490 955,500 985,540 940,556 840,556 815,525"],
  ["#f6ac5c", "985,428 1040,405 1100,418 1122,432 1130,490 1108,532 1050,520 1000,490"],
  ["#f49b3a", "945,502 1000,490 1052,516 1030,532 980,540"],
  ["#f5a549", "880,560 985,538 1015,556 985,582 900,590"],
  ["#f6b168", "1015,545 1050,520 1108,532 1095,550 1025,560"],
  ["#f39739", "1146,318 1190,318 1186,352 1150,342"],
  ["#f8c489", "1088,356 1150,342 1186,352 1200,382 1150,385 1090,378"],
  ["#f6ad60", "1086,382 1130,372 1175,388 1160,412 1105,404"],
  ["#f39b3b", "1128,462 1140,430 1160,412 1175,398 1200,388 1230,385 1250,402 1265,425 1286,435 1275,452 1265,472 1190,465 1135,468"],
  ["#f39d3f", "1090,602 1128,555 1160,546 1195,540 1228,575 1240,602 1262,612 1252,640 1180,640 1120,630"],
  ["#f5933a", "1130,640 1252,640 1242,668 1205,690 1135,685"],
  ["#f8bf80", "822,642 812,606 850,592 905,592 905,612 950,655 1005,695 1038,718 985,712 1005,745 985,770 975,760 985,738 960,715 920,700 885,670 862,645"],
  ["#f6ac5c", "820,698 850,688 848,733 822,740"], ["#f39d3f", "832,655 852,648 850,680 838,680"], ["#f3a044", "890,772 965,760 945,796"],
];
const borders = [
  "M1205,220l30,30-40,40-10,10", "M1280,455l30,6 30,14 40,10 20,20 50,10-15,40-50,10", "M1240,540l40,20 10,30-40,5", "M1728,475l-50,-10-40,20-50,20-20,30 20,40-5,20", "M1500,640l60,30 70,10 30,25", "M1590,680l20,50 70,20 10,-30",
  "M1440,800l60,-5 60,-15 50,10 40,60 60,80", "M1560,790l10,50-50,60-70,30", "M1450,930l110,-30 168,90", "M1190,930l10,120 8,80", "M1450,935v60l50,0 20,-50", "M960,216l-20,60 10,40", "M390,1110l40,30", "M390,985l150,-20", "M805,1131l-10,-60 30,-150", "M470,680l50,-10-20,100", "M1010,665l50,20 40,-30 40,30", "M1040,620l50,10 10,40-50,20", "M580,410l30,8",
];
const faint = [
  "M1290,240q40,30 80,10t90,30 60,-20 110,10 90,-10", "M1310,330q30,-20 60,10t70,-10 50,30 90,-10 70,20", "M1290,400q50,-30 90,0t70,-20 50,30 70,10 90,-30", "M1350,216l20,60-20,50 30,70-20,80", "M1450,216l-10,70 30,50-20,80 20,70", "M1540,216l20,80-30,60 20,70-30,80", "M1640,216l-20,80 30,60-20,110", "M1310,500q40,-20 90,20t80,0", "M1500,480q30,30 80,0", "M1700,300l-30,60 20,70", "M1450,560q50,30 90,0t60,20", "M1560,600l30,30 60,-5",
];
const roads = [
  "M1230,710q80,40 150,10t130,30 90,-10", "M1240,760q80,-30 150,10t110,10", "M1280,700l30,100", "M1360,715l-20,90", "M1430,720l20,70", "M1520,735l-20,60", "M480,700l60,60-40,30", "M420,735l100,-15 110,-5", "M500,640l30,80 90,40", "M560,650l-40,60-60,50", "M1350,930l-10,60 50,70 20,50", "M1260,935l60,40 40,40", "M1210,990q50,-40 90,0t60,-20", "M1380,960l40,60", "M1500,880q60,60 110,50t110,60", "M1530,1000l80,60 110,-20", "M1450,870l70,10 100,-30", "M1650,700l-20,60 50,60", "M1560,1020l10,70 80,30", "M560,880q70,-30 150,-10t170,40", "M1120,690l20,60", "M430,1090l80,-40 100,50",
];
type Label = [string, number, number, number, number, ("b" | "c" | "w" | "o")?];
const labels: Label[] = [
  ["Рейкьявик", 447, 239, 76, 11, "c"], ["Торсхавн", 657, 277, 62, 10, "c"], ["ШВЕЦИЯ", 1029, 227, 76, 13], ["НОРВЕГИЯ", 890, 278, 96, 14], ["ФИНЛЯНДИЯ", 1158, 267, 122, 14], ["Хельсинки", 1146, 299, 90, 13, "c"],
  ["Осло", 918, 321, 40, 13, "c"], ["Стокгольм", 1036, 332, 86, 13, "c"], ["Норд-Фьорд", 796, 371, 100, 11, "w"], ["ДАНИЯ", 880, 386, 62, 13], ["Копенгаген", 940, 404, 98, 13, "c"], ["СОЕДИНЕННОЕ", 698, 399, 150, 14], ["КОРОЛЕВСТВО", 695, 411, 150, 14],
  ["Дуглас", 675, 424, 52, 12, "c"], ["ИРЛАНДИЯ", 560, 446, 106, 14], ["ГОЛЛАНДИЯ", 804, 451, 116, 14], ["Берлин", 950, 445, 80, 18, "c"], ["ПОЛЬША", 1056, 471, 96, 16, "b"], ["Лондон", 656, 480, 84, 18, "c"], ["ГЕРМАНИЯ", 886, 487, 118, 16, "b"],
  ["Брюссель", 780, 502, 92, 14, "o"], ["ЧЕХИЯ", 985, 513, 62, 13, "b"], ["Сент-Хельер", 597, 524, 110, 13, "c"], ["Люксембург", 872, 526, 90, 12, "o"], ["СЛОВАКИЯ", 1066, 530, 110, 13, "b"], ["Париж", 730, 550, 76, 18, "o"], ["ФРАНЦИЯ", 732, 579, 116, 15, "b"],
  ["Лаго", 862, 578, 50, 14, "c"], ["ВЕНГРИЯ", 1052, 568, 92, 15], ["ЛАТВИЯ", 1172, 371, 80, 13], ["ЛИТВА", 1128, 394, 60, 12, "b"], ["Вильнюс", 1118, 413, 80, 12, "o"], ["БЕЛАРУСЬ", 1204, 437, 106, 14, "b"], ["Москва", 1366, 405, 80, 16, "c"], ["Киев", 1258, 485, 52, 15, "c"],
  ["УКРАИНА", 1272, 518, 106, 15], ["МОЛДАВИЯ", 1228, 561, 118, 14], ["РУМЫНИЯ", 1166, 598, 120, 16, "b"], ["Бухарест", 1250, 626, 106, 18, "c"], ["Черное море", 1348, 652, 132, 14, "w"], ["БОЛГАРИЯ", 1180, 660, 116, 15, "b"], ["ХОРВАТИЯ", 962, 612, 106, 14],
  ["Сараево", 988, 638, 84, 16, "c"], ["СЕРБИЯ", 1090, 635, 84, 15], ["Тирана", 1026, 677, 74, 17, "c"], ["Скопье", 1142, 692, 76, 16, "c"], ["Монако", 810, 655, 72, 13, "c"], ["ИТАЛИЯ", 912, 662, 100, 16], ["Неаполь", 958, 713, 78, 12, "o"], ["Тирренское море", 910, 732, 98, 10, "w"], ["Палермо", 928, 776, 72, 12, "o"],
  ["Ионическое", 1022, 774, 70, 10, "w"], ["море", 1022, 786, 34, 10, "w"], ["ГРЕЦИЯ", 1120, 745, 62, 12], ["Афины", 1150, 780, 50, 12, "c"], ["АЛБАНИЯ", 1065, 710, 56, 9], ["Балеарское", 690, 707, 64, 10, "w"], ["море", 690, 718, 34, 10, "w"], ["ИСПАНИЯ", 561, 726, 92, 14], ["Валенсия", 592, 743, 62, 11, "c"], ["Лиссабон", 438, 744, 56, 11, "c"], ["ПОРТУГАЛИЯ", 425, 768, 124, 14],
  ["Рабат", 420, 856, 40, 12, "c"], ["АЛЖИР", 630, 1025, 82, 16], ["ТУНИС", 850, 836, 64, 13], ["Мальта", 945, 822, 46, 11, "c"], ["Средиземное Море", 1098, 858, 120, 10, "w"], ["Мисурата", 958, 924, 62, 12, "c"], ["Сирдский", 1028, 924, 60, 11, "w"], ["залив", 1026, 936, 36, 11, "w"], ["ЛИВИЯ", 1013, 1057, 78, 18],
  ["ГРУЗИЯ", 1566, 677, 82, 14], ["АЗЕРБАЙДЖАН", 1660, 717, 98, 11], ["Ереван", 1562, 718, 56, 12, "c"], ["ТУРЦИЯ", 1420, 747, 76, 15], ["Анкара", 1346, 736, 54, 12, "c"], ["Бурса", 1240, 719, 40, 11, "c"], ["Эскишехир", 1266, 738, 72, 11, "c"], ["Стамбул", 1166, 708, 66, 10, "c"], ["Измир", 1226, 771, 50, 12, "c"], ["Конья", 1346, 784, 42, 12, "c"], ["Адана", 1410, 784, 42, 12, "c"],
  ["Анталья", 1310, 807, 58, 12, "c"], ["Мерсин", 1400, 809, 56, 12, "c"], ["Диярбакыр", 1514, 762, 78, 12, "c"], ["Газиантеп", 1496, 792, 70, 12, "c"], ["Тебриз", 1676, 769, 46, 12, "c"], ["Урмия", 1656, 790, 44, 11, "c"], ["Эрбиль", 1586, 805, 50, 12, "c"], ["Алеппо", 1490, 815, 52, 12, "c"], ["СИРИЯ", 1500, 837, 68, 17], ["Киркук", 1600, 832, 52, 12, "c"], ["КИПР", 1374, 843, 38, 11], ["ЛИВАН", 1442, 864, 42, 11],
  ["Дамаск", 1488, 883, 56, 13, "c"], ["Багдад", 1616, 877, 56, 15, "c"], ["Амман", 1452, 911, 54, 13, "c"], ["ИРАК", 1654, 914, 54, 15], ["Эль-К", 1707, 912, 36, 12, "c"], ["ИОРДАНИЯ", 1468, 931, 74, 10], ["ИЗРАИЛЬ", 1434, 954, 62, 10], ["Александрия", 1312, 956, 100, 14, "c"], ["Каир", 1350, 990, 42, 15, "c"], ["Бени-Мазар", 1346, 1032, 80, 12, "c"], ["ЕГИПЕТ", 1316, 1072, 80, 18], ["Сулеймания", 1696, 840, 60, 11, "c"],
];
const labelFill = { b: "#7d5326", c: "#555", w: "#4f74b8", o: "#a5672a" };
const bars: [number, number, number, number][] = [
  [880, 392, 895, 482], [1050, 368, 1058, 445], [1055, 445, 1058, 522], [976, 420, 982, 510], [946, 465, 957, 552], [1158, 240, 1146, 368], [1136, 306, 1132, 395], [1212, 345, 1203, 432], [698, 484, 728, 572], [896, 555, 910, 638], [1168, 498, 1160, 590], [1194, 575, 1186, 655], [1149, 278, 1146, 330],
];
const cities = [[703, 470], [980, 462], [1262, 490], [1086, 630], [1208, 672], [1174, 686], [1362, 386], [645, 420]];

const EuropeMap = ({ w, h, box, detail }: { w: number; h: number; box: string; detail?: boolean }) => (
  <svg width={w} height={h} viewBox={box} preserveAspectRatio="none">
    <rect x="-400" y="-400" width="3000" height="2600" fill={SEA} />
    {!detail && <polygon points="1110,217 1110,-300 2400,-300 2400,2200 -300,2200 -300,1050 391,885 391,1130 1727,1130 1727,217" fill={LAND} />}
    {lands.map((p) => <polygon key={p} points={p} fill={LAND} />)}
    {waters.map((p) => <polygon key={p} points={p} fill={SEA} />)}
    <g fill="none" stroke="#d6d3d6" strokeWidth="1.500">{faint.map((d) => <path key={d} d={d} />)}</g>
    <g fill="none" stroke="#dcc6e0" strokeWidth="2">{roads.map((d) => <path key={d} d={d} />)}</g>
    {tinted.map(([f, p]) => <polygon key={p} points={p} fill={f} stroke="#fff" strokeWidth="1.400" strokeDasharray="5 3" />)}
    <polygon points="812,572 842,558 885,560 895,575 860,592 815,590" fill={LAND} />
    <polygon points="1010,568 1095,550 1125,560 1095,598 1035,600" fill={LAND} />
    <g fill="none" stroke="#999" strokeWidth="2.200">{borders.map((d) => <path key={d} d={d} />)}</g>
    {detail && <g fill="#c33">{cities.map(([x, y]) => <circle key={x} cx={x} cy={y} r="2.200" />)}</g>}
    {labels.map(([t, x, y, len, s, k], i) => {
      if (!detail && (k || i % 2)) return null;
      const soft = k && k !== "b";
      return (
        <text key={i} x={x - len / 2} y={y} fontSize={s} textLength={len} lengthAdjust="spacingAndGlyphs" letterSpacing="0" fontWeight={soft ? 500 : 800} fontStyle={s < 14 ? "italic" : "normal"} fill={k ? labelFill[k] : "#222"}>{t}</text>
      );
    })}
    {detail && bars.map(([x1, y1, x2, y2]) => (
      <g key={`${x1}-${y1}`}>
        <path d={`M${x1} ${y1}L${x2} ${y2}`} stroke="#bb8c16" strokeWidth="9" />
        <path d={`M${x1 - 1} ${y1}L${x2 - 1} ${y2}`} stroke="#dba820" strokeWidth="5" />
      </g>
    ))}
  </svg>
);

/* ---------- icons inside the 3D Maps window ---------- */

type Kind = "play" | "film" | "camera" | "image" | "globe" | "gear" | "table" | "shapes" | "flat" | "pin" | "chart" | "textbox" | "list" | "clock" | "date" | "pane" | "side" | "fields";
const MiniIcon = ({ kind }: { kind: Kind }) => {
  const g = "#777";
  const b = "#4a7fbd";
  const globe = <g fill="#fff" stroke={g} strokeWidth=".8"><circle cx="7" cy="7" r="5.500" /><path d="M1.500 7h11M7 1.500v11M3 3.500q4 2.500 8 0M3 10.500q4-2.500 8 0" fill="none" /><ellipse cx="7" cy="7" rx="2.600" ry="5.500" fill="none" /></g>;
  const art: Record<Kind, React.ReactNode> = {
    play: <path d="M4 1.500l7.500 5.500L4 12.500z" fill="#6aa58a" />,
    film: <g fill="none" stroke={g}><path d="M3 3h9v8H3z" /><path d="M2 2v10M13 2v10" strokeDasharray="1 1" /><path d="M1 1h3v3H1z" fill="#f0b44c" stroke="none" /></g>,
    camera: <g><path d="M3 1h9v7" fill="none" stroke={g} strokeWidth=".7" strokeDasharray="1 1" /><path d="M1 7h8v6H1zM3 6h3v1H3z" fill={g} /><circle cx="5" cy="10" r="1.600" fill="#fff" /><path d="M10 11h4M12 9v4" stroke={b} /></g>,
    image: <g><path d="M2 2.500h11v10H2z" fill="#fff" stroke={g} strokeWidth=".8" /><path d="M3 12l4-6 2 3 1.500-1L13 12z" fill={b} /><path d="M0 2.500h5M2.500 0v5" stroke="#5a9f7b" strokeWidth="1.400" /><circle cx="10.500" cy="4.800" r="1.100" fill="#f0b44c" /></g>,
    globe: <g>{globe}<path d="M13 3l-5 7-2 2" stroke={b} strokeWidth="1.500" fill="none" /></g>,
    gear: <g><path d="M1 1.500h11v9H1z" fill="#fff" stroke={g} strokeWidth=".8" /><circle cx="10" cy="10" r="2.500" fill="#fff" stroke="#df7a36" strokeWidth="1.700" /></g>,
    table: <g><path d="M.5 1.500h12v11H.5zM4.500 2v10M8.500 2v10M.5 7h12" fill="#fff" stroke={g} strokeWidth=".8" /><path d="M0 1h13v2.500H0z" fill="#777" /><circle cx="11" cy="10.500" r="2.500" fill="#fff" stroke="#4fa07b" /></g>,
    shapes: <g fill="#fff" stroke="#7fa3cf"><path d="M6 2q4-3 7 2L9 9 5 6z" /><path d="M1 5h6v4l-3 4-3-4z" /></g>,
    flat: <g><path d="M1 8l5-3 7 3-5 4z" fill="#fff" stroke={g} strokeWidth=".8" /><circle cx="8" cy="3.500" r="2.500" fill={b} /><path d="M6.500 5L8 9l1.500-4z" fill={b} /></g>,
    pin: <g>{globe}<circle cx="11" cy="3" r="2.300" fill={b} /><path d="M9.500 4l1.500 4L12.500 4z" fill={b} /></g>,
    chart: <g><path d="M1 8h3v5H1z" fill={g} /><path d="M5 4h3v9H5z" fill={b} /><path d="M9 1h3.500v12H9z" fill="#ecbf6b" /></g>,
    textbox: <g><path d="M.5 1.500h13v11H.5z" fill="#fff" stroke={g} strokeWidth=".8" /><text x="2" y="8" fontSize="6.500" fontWeight="700" fill={b}>A</text><path d="M8 4h4M8 6h4M2 9.500h10M2 11h10" stroke="#aaa" strokeWidth=".7" /></g>,
    list: <g><path d="M1.500 1.500h11v11h-11z" fill="#fff" stroke={g} strokeWidth=".8" /><path d="M3 4h1.500M3 7h1.500M3 10h1.500M6 4h5M6 7h5M6 10h5" stroke={g} /></g>,
    clock: <g fill="#fff" stroke={b}><circle cx="7" cy="7" r="6" /><path d="M7 3v4.500h3.500" fill="none" stroke={g} /></g>,
    date: <g><path d="M.5 1.500h11v10H.5z" fill="#fff" stroke={g} strokeWidth=".8" /><text x="1.500" y="7.500" fontSize="6" fontWeight="700" fill={b}>A</text><path d="M7 4h3M7 6h3" stroke="#aaa" /><circle cx="10.500" cy="10" r="3" fill="#fff" stroke={b} strokeWidth=".8" /></g>,
    pane: <g><path d="M1 2h12v10H1z" fill="#fff" stroke={g} strokeWidth=".7" /><path d="M1 1h12v2.200H1zM5 3h1v9H5z" fill="#2f6db3" /><path d="M2 5h2M2 7h2M2 9h2" stroke={b} /></g>,
    side: <g><path d="M1 2h12v10H1z" fill="#fff" stroke={g} strokeWidth=".7" /><path d="M1 1h12v2.200H1zM8 3h1v9H8z" fill="#2f6db3" /><path d="M10 5h2M10 7h2M10 9h2" stroke={b} /></g>,
    fields: <g><path d="M2.500 1.500h9v12h-9z" fill="#fff" stroke={g} strokeWidth=".7" /><path d="M2 1h10v2.200H2z" fill={b} /><path d="M4 5h6M4 7h6M4 9h6M4 11h6" stroke="#999" strokeWidth=".8" /></g>,
  };
  return <svg width="14" height="14" viewBox="0 0 14 14">{art[kind]}</svg>;
};

type Item = { w: number; k: Kind; t: string; on?: boolean; dim?: boolean };
const shotGroups: { w: number; pl: number; name: string; items: Item[] }[] = [
  { w: 99, pl: 2, name: "Обзор", items: [{ w: 44, k: "play", t: "Воспроизвести\nобзор ▾" }, { w: 22, k: "film", t: "Создать\nвидео" }, { w: 28, k: "camera", t: "Захватить\nэкран" }] },
  { w: 80, pl: 3, name: "Сцена", items: [{ w: 23, k: "image", t: "Новая\nсцена ▾" }, { w: 19, k: "globe", t: "Темы\n▾" }, { w: 31, k: "gear", t: "Параметры\nсцены" }] },
  { w: 58, pl: 3, name: "Слой", items: [{ w: 28, k: "table", t: "Обновить\nданные" }, { w: 24, k: "shapes", t: "Фигуры\n▾" }] },
  { w: 116, pl: 3, name: "Карта", items: [{ w: 24, k: "globe", t: "Подписи\nна карте", on: true }, { w: 25, k: "flat", t: "Плоская\nкарта", on: true }, { w: 19, k: "pin", t: "Поиск\nместа" }, { w: 43, k: "globe", t: "Настраиваемые\nобласти" }] },
  { w: 90, pl: 4, name: "Вставить", items: [{ w: 31, k: "chart", t: "Двумерная\nдиаграмма" }, { w: 29, k: "textbox", t: "Текстовое\nполе" }, { w: 24, k: "list", t: "Легенда" }] },
  { w: 57, pl: 3, name: "Время", items: [{ w: 30, k: "clock", t: "Временная\nшкала", dim: true }, { w: 20, k: "date", t: "Дата и\nвремя", dim: true }] },
  { w: 76, pl: 3, name: "Просмотр", items: [{ w: 25, k: "pane", t: "Редактор\nобзора", on: true }, { w: 24, k: "side", t: "Область\nслоев", on: true }, { w: 22, k: "fields", t: "Список\nполей" }] },
];
const Cross = ({ s = 5, c = "#555", sw = 1 }: { s?: number; c?: string; sw?: number }) => (
  <svg width={s} height={s} viewBox="0 0 5 5"><path d="M.3.3l4.400 4.400M4.700.3L.3 4.700" stroke={c} strokeWidth={sw} /></svg>
);
const Plus = () => <svg width="4" height="4" viewBox="0 0 4 4"><path d="M0 2h4M2 0v4" stroke="#555" /></svg>;
const LayerTools = () => (
  <svg width="27" height="8" viewBox="0 0 27 8"><ellipse cx="4" cy="4" rx="3" ry="2" fill="none" stroke="#666" /><circle cx="4" cy="4" r="1.100" fill="#444" /><path d="M11 7l5-6" stroke="#555" strokeWidth="1.300" /><path d="M21 1l5.500 6M26.500 1L21 7" stroke="#444" strokeWidth="1.300" /></svg>
);
const Tri = ({ down }: { down?: boolean }) => <svg width="4" height="4" viewBox="0 0 4 4"><path d={down ? "M0 1h4L2 3.500z" : "M1 0l2 2-2 2z"} fill="#333" /></svg>;
const AddField = () => <FieldRow><Plus />&nbsp;&nbsp;Добавить поле</FieldRow>;

const scenes = [
  { no: "", label: "Сцена 10", box: "470 220 1000 600" },
  { no: "11", label: "Сцена 11", box: "520 254 1000 560" },
  { no: "12", label: "Сцена 12", box: "460 300 1020 500", legend: true },
  { no: "13", label: "Сцена 13", box: "200 310 1250 540", legend: true },
  { no: "14", label: "Сцена 14", box: "390 250 1338 850", legend: true },
];

const MapsWindow = () => (
  <Shot>
    <ShotBody>
      <ShotTitle>
        <svg width="8" height="8" viewBox="0 0 8 8"><path d="M4 1h4v6H4z" fill="#fff" stroke={GREEN} strokeWidth=".6" /><path d="M0 0h5v8H0z" fill={GREEN} /><path d="M1.300 2.500l2.200 3M3.500 2.500l-2.200 3" stroke="#fff" strokeWidth=".8" /></svg>
        <Gap $w={3} />ИКТ 2 КРЕДИТ Әбуталіп Асылажар.xlsx — 3D Maps<Grow />
        <ShotWinBtn><svg width="5" height="3"><rect x=".5" y=".5" width="4" height="2" fill="#fff" stroke="#777" strokeWidth=".7" /></svg></ShotWinBtn>
        <ShotWinBtn><svg width="6" height="5"><path d="M2 .5h3.500v3H2zM.5 2H4v2.500H.5z" fill="#fff" stroke="#555" strokeWidth=".8" /></svg></ShotWinBtn>
        <ShotWinBtn><svg width="6" height="5"><path d="M.5.5h5v4h-5z" fill="#fff" stroke="#777" strokeWidth=".7" /><path d="M1.500 1l3 3M4.500 1l-3 3" stroke="#555" strokeWidth=".8" /></svg></ShotWinBtn>
      </ShotTitle>
      <ShotTabs>
        <ShotTab $file>ФАЙЛ</ShotTab>
        <ShotTab>ГЛАВНАЯ</ShotTab>
        <ShotFeedback>Отправить отзыв</ShotFeedback>
      </ShotTabs>
      <ShotRibbon>
        {shotGroups.map((g) => (
          <ShotGroup key={g.name} $w={g.w}>
            <ShotGroupItems $pl={g.pl}>
              {g.items.map((it) => <ShotItem key={it.t} $w={it.w} $on={it.on} $dim={it.dim}><MiniIcon kind={it.k} />{it.t}</ShotItem>)}
            </ShotGroupItems>
            <ShotGroupName>{g.name}</ShotGroupName>
          </ShotGroup>
        ))}
      </ShotRibbon>
      <ShotMain>
        <TourPane>
          <TourHead>Обзор 5<TourClose><Cross c="#444" /></TourClose></TourHead>
          <TourBody>
            <SceneList>
              {scenes.map((s, i) => (
                <SceneRow key={s.label}>
                  <SceneNo>{s.no}</SceneNo>
                  <SceneThumb $on={i === 4}>
                    <EuropeMap w={95} h={51} box={s.box} />
                    {s.legend && <SceneLegend />}
                    <SceneCaption $haze={!s.legend}><span>{s.label}</span><span>(10 с)</span></SceneCaption>
                  </SceneThumb>
                </SceneRow>
              ))}
            </SceneList>
            <TourScroll><Caret w={3} /><TourTrack /><Caret w={3} /></TourScroll>
          </TourBody>
        </TourPane>
        <MapPane>
          <EuropeMap w={446} h={305} box="390 216 1338 915" detail />
          <Legend>
            <LegendTitle>Слой 1</LegendTitle>
            <LegendName>Продажи (Сумма)</LegendName>
            <LegendBar $from="#fdeedd" $to="#ee8a16" />
            <LegendScale><span>64.71%</span><span>85.19%</span></LegendScale>
            <LegendName>Реклама (Сумма)</LegendName>
            <LegendBar $from="#dcc6ea" $to="#6a1fa8" />
            <LegendScale><span>64.71%</span><span>85.19%</span></LegendScale>
          </Legend>
          <Nav $x={402} $y={217}><Chevron up c="#666" /></Nav>
          <Nav $x={384} $y={235}><svg width="6" height="8"><path d="M5 1L2 4l3 3" fill="none" stroke="#666" strokeWidth="1.600" /></svg></Nav>
          <Nav $x={420} $y={235}><svg width="6" height="8"><path d="M1 1l3 3-3 3" fill="none" stroke="#666" strokeWidth="1.600" /></svg></Nav>
          <Nav $x={402} $y={253}><Chevron c="#666" /></Nav>
          <Nav $x={384} $y={279}><svg width="8" height="8"><path d="M0 4h8M4 0v8" stroke="#666" strokeWidth="1.400" /></svg></Nav>
          <Nav $x={420} $y={279}><svg width="8" height="8"><path d="M0 4h8" stroke="#666" strokeWidth="1.600" /></svg></Nav>
          <Credit>© 2025 TomTom, Microsoft, TomTom, OpenStreetMap, GeoNames</Credit>
        </MapPane>
        <LayerPane>
          <LayerTop>
            <AddLayer>
              <svg width="9" height="9" viewBox="0 0 9 9"><path d="M2 5l3-1.500L8.500 5 5 6.500zM2 7l3 1.500L8.500 7" fill="#fff" stroke="#555" strokeWidth=".8" /><path d="M0 2.500h4M2 .5v4" stroke="#4fa07b" /><path d="M4 2.500h4" stroke="#e0a040" /></svg>
              Добавить слой
            </AddLayer>
            <Cross />
          </LayerTop>
          <LayerRow><Tri /><LayerName>Слой 1</LayerName><LayerTools /></LayerRow>
          <LayerRow $on><Tri down /><LayerName>Слой 2</LayerName><LayerTools /></LayerRow>
          <SubHead $green $mb={6}><Tri down />Данные</SubHead>
          <ShapeRow>
            <ShapeBtn $on><svg width="9" height="9"><path d="M.5 8.500v-7h2v7zM3.500 8.500v-6h2v6zM6.500 8.500v-8h2v8z" fill="#d5ebe0" stroke="#5a7f6c" /></svg></ShapeBtn>
            <ShapeBtn><svg width="9" height="9"><path d="M.5 8.500v-8h2v8zM3.500 8.500v-6h2v6zM6.500 8.500v-5h2v5z" fill="#fff" stroke="#888" strokeWidth=".8" /></svg></ShapeBtn>
            <ShapeBtn><svg width="9" height="9"><path d="M0 1h5v3H0zM5 5h3v3H5z" fill="none" stroke="#999" strokeWidth=".8" /><circle cx="3" cy="7" r="1.600" fill="#888" /><circle cx="7" cy="2" r="1" fill="#888" /></svg></ShapeBtn>
            <ShapeBtn><svg width="8" height="8"><circle cx="4" cy="4" r="3.500" fill="#aaa" /><circle cx="4.500" cy="3.500" r="1.800" fill="#555" /></svg></ShapeBtn>
            <ShapeBtn><svg width="9" height="7"><path d="M2.500.5h6l-1.500 4H1z" fill="#fff" stroke="#666" strokeWidth=".8" /><path d="M0 6h5" stroke="#666" /></svg></ShapeBtn>
          </ShapeRow>
          <FieldName>Расположение<a>100 %</a></FieldName>
          <FieldBox $h={22} $mb={8}>
            <FieldRow><svg width="5" height="5"><circle cx="2.500" cy="2.500" r="2" fill="none" stroke="#888" strokeWidth=".7" /><circle cx="2.500" cy="2.500" r="1" fill="#333" /></svg>Страна<Grow />Страна/регио<Caret w={3} /><Cross s={6} sw={1.1} /></FieldRow>
            <AddField />
          </FieldBox>
          <FieldName>Высота</FieldName>
          <FieldBox $h={24} $mb={8}>
            <FieldRow>Регион (Количество непустых)<Grow /><Caret w={3} /><Cross s={6} sw={1.1} /></FieldRow>
            <AddField />
          </FieldBox>
          <FieldName>Категория</FieldName>
          <FieldBox $h={12} $mb={8}><AddField /></FieldBox>
          <FieldName>Время</FieldName>
          <FieldBox $h={12} $mb={6}><AddField /></FieldBox>
          <SubHead><Tri />Фильтры</SubHead>
          <SubHead><Tri />Параметры слоя</SubHead>
        </LayerPane>
      </ShotMain>
      <ShotStatus>
        <StatusWord $w={91}>ГОТОВО</StatusWord>
        <StatusWord $w={100}>ЗАВЕРШЕНО</StatusWord>
        <Grow />
        <StatusKey><svg width="8" height="7"><path d="M.5.5h7v6h-7z" fill="none" stroke="#fff" /><path d="M1 6l2-2 1.500 1 1-1L7 6z" fill="#fff" /></svg></StatusKey>
        <StatusKey><svg width="8" height="8"><path d="M.5.5h7v7h-7z" fill="none" stroke="#b5d5c3" /><path d="M2 2l3 3M5 3v3" stroke="#b5d5c3" /></svg></StatusKey>
        <StatusKey $on><svg width="8" height="8"><path d="M.5.5h7v7h-7z" fill="none" stroke="#b5d5c3" strokeDasharray="3 1" /><path d="M2 2l4 4M6 2L2 6" stroke="#b5d5c3" /></svg></StatusKey>
      </ShotStatus>
    </ShotBody>
  </Shot>
);

/* ---------- worksheet data ---------- */

const colName = (i: number) => (i < 26 ? String.fromCharCode(65 + i) : "A" + String.fromCharCode(65 + i - 26));
const colWidths = [68, 99, 110, ...Array.from({ length: 40 }, () => 32)];
const table: Record<number, [string, string, string]> = {
  2: ["Қалалар/аймақтар", "Ауруды жұқтырғандар саны", "Аурудан қайтыс болғандар саны"],
  3: ["Мәскеу", "12194", "4736"],
  4: ["Санкт-Петербург", "5391", "2653"],
  5: ["Новосибирск", "7355", "3145"],
  6: ["Екатеринбург", "8773", "3598"],
  7: ["Қазан", "9365", "3487"],
};
const heading = ".  Ресей елінде 5жыл  (2019-2020жж) ішіндегі   аралығында туберкулез ауруының қала немесе аймақ бойынша таралу (ауырғандар саны, қайтыс болғандар саны) статистикасы";

const Worksheet = () => (
  <SheetArea>
    <Sheet>
      <HeadRow>
        <ColHead $w={15} />
        {colWidths.map((w, i) => <ColHead key={i} $w={w} $on={i === 2}>{colName(i)}</ColHead>)}
      </HeadRow>
      {Array.from({ length: 60 }, (_, i) => i + 1).map((n) => {
        const d = table[n];
        return (
          <Row key={n}>
            <RowHead $on={n === 39}>{n}</RowHead>
            {n === 1 ? (
              <Overflow><HeadingText>{heading}</HeadingText></Overflow>
            ) : (
              <>
                <Cell $w={68} $dark={!!d}>{d?.[0]}</Cell>
                <Cell $w={99} $dark={!!d} $num={n > 2}>{d?.[1]}</Cell>
                <Cell $w={110} $dark={!!d} $num={n > 2}>{d?.[2]}</Cell>
              </>
            )}
            <Rest />
          </Row>
        );
      })}
    </Sheet>
    <VScroll>
      <ScrollKey><svg width="7" height="4"><path d="M0 4h7L3.500 0z" fill="#777" /></svg></ScrollKey>
      <VThumb />
      <Grow />
      <ScrollKey><Caret c="#777" w={7} /></ScrollKey>
    </VScroll>
    <Selection />
    <MapsWindow />
  </SheetArea>
);

/* ---------- ribbon content ---------- */

const tabs: [string, number][] = [["Файл", 60], ["Главная", 70], ["Вставка", 70], ["Разметка страницы", 133], ["Формулы", 82], ["Данные", 70], ["Рецензирование", 117], ["Вид", 48], ["Справка", 73], ["Power Pivot", 89]];

const RibbonBar = () => (
  <Ribbon>
    <Group $w={100}>
      <GroupBody>
        <Big $w={62}><BigIcon $shift={1}><PasteIcon /></BigIcon><BigLine>Вставить</BigLine><BigLine><Caret /></BigLine></Big>
        <Stack $w={37} $pt={0}>
          <ToolRow $h={20}><Scissors /></ToolRow>
          <ToolRow $h={25}><CopyIcon /><Gap $w={5} /><Caret /></ToolRow>
          <ToolRow $h={20}><Painter /></ToolRow>
        </Stack>
      </GroupBody>
      <GroupFoot><GroupName $shift={2}>Буфер обмена</GroupName><Gap $w={4} /><Launcher /></GroupFoot>
    </Group>
    <Group $w={207}>
      <GroupBody>
        <Stack $w={205} $pl={4}>
          <ToolRow $h={23}>
            <Combo $w={112}>Calibri<Caret /></Combo><Combo $w={44}>11<Caret /></Combo>
            <Gap $w={6} /><FontSize up /><Gap $w={8} /><FontSize />
          </ToolRow>
          <ToolRow $h={38}>
            <Tool $w={21}><Letter>Ж</Letter></Tool><Tool $w={22}><Letter $kind="i">К</Letter></Tool><Tool $w={22}><Letter $kind="u">Ч</Letter></Tool><Tool $w={12}><Caret /></Tool>
            <Gap $w={5} /><Rule $h={21} />
            <Gap $w={7} /><Tool $w={16}><BordersIcon /></Tool><Tool $w={18}><Caret /></Tool><Gap $w={1} /><Rule $h={21} />
            <Gap $w={7} /><FillIcon /><Gap $w={4} /><Caret /><Gap $w={7} /><FontColor /><Gap $w={5} /><Caret />
          </ToolRow>
        </Stack>
      </GroupBody>
      <GroupFoot><GroupName $shift={-6}>Шрифт</GroupName><Launcher /></GroupFoot>
    </Group>
    <Group $w={367}>
      <GroupBody>
        <Stack $w={128} $pl={4}>
          <ToolRow $h={23}>
            <Tool $w={22}><Lines h={20} rows={[[0, 1, 14], [2, 5, 10], [0, 9, 14]]} /></Tool>
            <Tool $w={22}><Lines rows={[[0, 2, 14], [2, 6, 10], [0, 10, 14]]} /></Tool>
            <Tool $w={22} $on><Lines h={12} rows={[[2, 3, 10], [0, 7, 14], [2, 11, 10]]} /></Tool>
            <Gap $w={3} /><Rule $h={21} /><Gap $w={8} /><Orient /><Gap $w={4} /><Caret />
          </ToolRow>
          <ToolRow $h={38}>
            <Tool $w={22}><Lines h={13} rows={[[0, 0, 14], [0, 3, 9], [0, 6, 14], [0, 9, 9]]} /></Tool>
            <Tool $w={22}><Lines h={13} rows={[[0, 0, 14], [2, 3, 10], [0, 6, 14], [2, 9, 10]]} /></Tool>
            <Tool $w={22}><Lines h={13} rows={[[0, 0, 14], [5, 3, 9], [0, 6, 14], [5, 9, 9]]} /></Tool>
            <Gap $w={3} /><Rule $h={21} /><Gap $w={8} /><Indent /><Gap $w={6} /><Indent right />
          </ToolRow>
        </Stack>
        <Stack $w={1} $pt={6}><Rule $h={56} as="div" /></Stack>
        <Stack $w={236} $pl={6}>
          <ToolRow $h={23}><Gap $w={1} /><WrapIcon /><Gap $w={5} />Перенести текст</ToolRow>
          <ToolRow $h={38}><MergeIcon /><Gap $w={4} />Объединить и поместить в центре<Gap $w={9} /><Caret /></ToolRow>
        </Stack>
      </GroupBody>
      <GroupFoot><GroupName $shift={-6}>Выравнивание</GroupName><Launcher /></GroupFoot>
    </Group>
    <Group $w={140}>
      <GroupBody>
        <Stack $w={139} $pl={4}>
          <ToolRow $h={23}><Combo $w={131}>Общий<Caret /></Combo></ToolRow>
          <ToolRow $h={38}>
            <Tool $w={22}><Digits $size={16}>$</Digits></Tool><Tool $w={12}><Caret /></Tool><Tool $w={23}><Digits $size={15}>%</Digits></Tool><Tool $w={20}><Digits $size={9}>000</Digits></Tool>
            <Gap $w={5} /><Rule $h={21} /><Gap $w={6} /><Decimal more /><Gap $w={6} /><Decimal />
          </ToolRow>
        </Stack>
      </GroupBody>
      <GroupFoot><GroupName $shift={-8}>Число</GroupName><Launcher /></GroupFoot>
    </Group>
    <Group $w={254}>
      <GroupBody>
        <Big $w={108} $ml={4}><BigIcon $shift={1}><CondIcon /></BigIcon><BigLine>Условное</BigLine><BigLine>форматирование<Caret /></BigLine></Big>
        <Big $w={93}><BigIcon $shift={2}><TableIcon /></BigIcon><BigLine>Форматировать</BigLine><BigLine>как таблицу<Caret /></BigLine></Big>
        <Big $w={44}><BigIcon $shift={2}><StyleIcon /></BigIcon><BigLine>Стили</BigLine><BigLine>ячеек<Caret /></BigLine></Big>
      </GroupBody>
      <GroupFoot><GroupName>Стили</GroupName></GroupFoot>
    </Group>
    <Group $w={159}>
      <GroupBody>
        <Big $w={52} $ml={4}><BigIcon><InsertIcon /></BigIcon><BigLine>Вставить</BigLine><BigLine><Caret /></BigLine></Big>
        <Big $w={50}><BigIcon><DeleteIcon /></BigIcon><BigLine>Удалить</BigLine><BigLine><Caret /></BigLine></Big>
        <Big $w={47}><BigIcon><FormatIcon /></BigIcon><BigLine>Формат</BigLine><BigLine><Caret /></BigLine></Big>
      </GroupBody>
      <GroupFoot><GroupName $shift={3}>Ячейки</GroupName></GroupFoot>
    </Group>
    <Group $w={249}>
      <GroupBody>
        <Stack $w={107} $pt={0} $pl={7}>
          <ToolRow $h={21}><Sigma /><Gap $w={4} />Автосумма<Gap $w={11} /><Caret /></ToolRow>
          <ToolRow $h={25}><FillDown /><Gap $w={5} />Заполнить<Gap $w={3} /><Caret /></ToolRow>
          <ToolRow $h={21}><Gap $w={1} /><Eraser /><Gap $w={5} />Очистить<Gap $w={3} /><Caret /></ToolRow>
        </Stack>
        <Big $w={72}><BigIcon><SortIcon /></BigIcon><BigLine>Сортировка</BigLine><BigLine>и фильтр<Caret /></BigLine></Big>
        <Big $w={64}><BigIcon $shift={-2}><FindIcon /></BigIcon><BigLine>Найти и</BigLine><BigLine>выделить<Caret /></BigLine></Big>
      </GroupBody>
      <GroupFoot><GroupName $shift={3}>Редактирование</GroupName></GroupFoot>
    </Group>
    <Collapse><Chevron up /></Collapse>
  </Ribbon>
);

/* ---------- taskbar art ---------- */

const SearchArt = () => (
  <svg width="68" height="36" viewBox="0 0 68 36">
    <g fill="#f6b52c"><circle cx="8" cy="9" r="4" /><circle cx="3.500" cy="13" r="3.500" /><circle cx="12" cy="13" r="3.500" /><circle cx="6" cy="17.500" r="3.500" /><circle cx="11" cy="17.500" r="3.200" /><circle cx="16" cy="4" r="2.400" /><circle cx="63" cy="6" r="2.600" /><circle cx="60" cy="9.500" r="2.600" /><circle cx="66" cy="9.500" r="2.600" /><circle cx="63" cy="12.500" r="2.600" /></g>
    <g fill="#e2641c"><circle cx="8" cy="13.500" r="2.600" /><circle cx="16" cy="4" r="1" /><circle cx="63" cy="9.500" r="1.600" /></g>
    <g fill="#6d9b22"><path d="M3 24c8-3 12 2 14 9-7 2-13-1-14-9zM49 1c7 2 10 7 8 13-6-2-9-6-8-13zM51 34c0-9 5-13 15-14 1 9-4 14-14 13z" /></g>
    <path d="M4 25l9 6M50 3l6 10M49 36L62 23" stroke="#d8d35a" fill="none" />
    <circle cx="34" cy="18.500" r="16" fill="#5b93dc" /><circle cx="30" cy="23" r="11" fill="#8cc0f5" opacity=".55" />
    <path d="M25 6c4-3 10-4 14-2l2 3-4 2-2 3-4 1-1 3-5-2-3-4zM42 6c4 2 7 6 7.500 11l-3 2-3-3 1-4-4-1zM32 17c4-2 8-1 11 1l2 4-4 5-2 5c-3 1-4-2-4-5l-4-3c-2-2-1-5 1-7z" fill="#3d8f2e" />
  </svg>
);
const EdgeIcon = () => (
  <svg width="24" height="24" viewBox="0 0 24 24">
    <defs><linearGradient id="edgeA" x1="0" x2="1"><stop offset="0" stopColor="#2bb3e8" /><stop offset="1" stopColor="#63dd6a" /></linearGradient></defs>
    <circle cx="12" cy="12" r="12" fill="#1a6fc4" /><path d="M.2 10C1 4 6 0 12 0c7 0 12 5 12 10 0 4-3 6-6 6-3 0-4-1-3.500-2.500C16 10 13 7 9 7 5 7 1 9 .2 12z" fill="url(#edgeA)" />
    <path d="M9 8c-4 3-4 11 3 15-7 1-12-5-12-11 1-3 5-5 9-4z" fill="#2a9be6" /><path d="M11 11c-3 3-1 8 3 9 3 1 6 0 8-2-2 4-6 6-10 6-6-3-6-10-1-13z" fill="#12508f" />
  </svg>
);
const FolderIcon = () => (
  <svg width="24" height="20" viewBox="0 0 24 20"><path d="M1 1h9l2 2h10v5H1z" fill="#d99a20" /><path d="M1 5h22v14H1z" fill="#f9d568" /><path d="M4 19v-7a2 2 0 0 1 2-2h12a2 2 0 0 1 2 2v7h-4v-4H8v4z" fill="#3d96d8" /></svg>
);
const StoreIcon = () => (
  <svg width="24" height="25" viewBox="0 0 24 25"><path d="M7.500 7V4.500a4.500 4.500 0 0 1 9 0V7" fill="none" stroke="#fff" strokeWidth="1.600" /><path d="M0 7h24v14a3 3 0 0 1-3 3H3a3 3 0 0 1-3-3z" fill="#fff" /><path d="M6.500 10h5v5h-5z" fill="#e8532a" /><path d="M12.500 10h5v5h-5z" fill="#7cb82f" /><path d="M6.500 16h5v5h-5z" fill="#1fa2e6" /><path d="M12.500 16h5v5h-5z" fill="#fbb813" /></svg>
);
const ExcelIcon = () => (
  <svg width="24" height="22" viewBox="0 0 24 22"><path d="M12 3h11v16H12z" fill="#fff" stroke="#2a8a55" /><path d="M14 6h8M14 9h8M14 12h8M14 15h8M18 5v12" stroke={GREEN} /><path d="M0 2.500L13 0v22L0 19.500z" fill="#1f7244" /><path d="M4 7l5 8M9 7l-5 8" stroke="#fff" strokeWidth="1.900" /></svg>
);

export default function App() {
  return (
    <Screen>
      <Global />
      <TitleBar>
        <QuickBar>
          <SaveIcon /><Gap $w={15} /><Undo /><Gap $w={4} /><Caret c="#4f9470" w={5} /><Gap $w={10} /><Undo flip /><Gap $w={5} /><Caret c="#4f9470" w={5} /><Gap $w={14} />
          <svg width="6" height="7"><path d="M0 .5h6" stroke="#fff" /><path d="M0 3h6L3 6.500z" fill="#fff" /></svg>
        </QuickBar>
        <TitleText $w={300} $mr={340}>Копия соңғы икт 2 кредит Әбуталіп Асылажар&nbsp; -&nbsp; Excel</TitleText>
        <TitleText $w={117} $mr={24}>vStudru321@kgmu.kz</TitleText>
        <WinIcons>
          <svg width="14" height="11"><path d="M.5.5h13v10H.5zM.5 3h13M7 9V5M5 7l2-2 2 2" fill="none" stroke="#fff" /></svg><Gap $w={35} />
          <svg width="10" height="2"><path d="M0 .5h10" stroke="#fff" /></svg><Gap $w={36} />
          <svg width="11" height="11"><path d="M.5 2.500h8v8h-8zM2.500 2.500v-2h8v8h-2" fill="none" stroke="#fff" /></svg><Gap $w={35} />
          <svg width="11" height="11"><path d="M.5.5l10 10M10.500.5l-10 10" stroke="#fff" /></svg>
        </WinIcons>
      </TitleBar>
      <TabBar>
        <Gap $w={1} />
        {tabs.map(([t, w], i) => <Tab key={t} $w={w} $on={i === 1}>{t}</Tab>)}
        <Tell>
          <svg width="12" height="17" viewBox="0 0 12 17"><path d="M3.500 11.500c0-3-3-3-3-6.500a5.500 5 0 0 1 11 0c0 3.500-3 3.500-3 6.500zM4 13.500h4M4.500 15.500h3" fill="none" stroke="#fff" strokeWidth="1.100" /></svg>
          Что вы хотите сделать?
        </Tell>
        <Share>
          <svg width="15" height="16" viewBox="0 0 15 16"><circle cx="7" cy="5" r="4.300" fill="none" stroke="#fff" strokeWidth="1.200" /><path d="M.5 15.500c0-3 2-5.500 5-6M8 12.500h7M11.500 9v7" fill="none" stroke="#fff" strokeWidth="1.200" /></svg>
          Общий доступ
        </Share>
      </TabBar>
      <RibbonBar />
      <FormulaBar>
        <Box $w={102}><NameText>C39</NameText><Caret w={8} /><Gap $w={6} /></Box>
        <Gap $w={13} />
        <svg width="4" height="26"><path d="M2 7v12" stroke="#aaa" strokeWidth="2" strokeDasharray="2 3" /></svg>
        <Gap $w={13} />
        <Box $w={110}>
          <Gap $w={12} /><svg width="12" height="11"><path d="M1 1l9 9M10 1L1 10" stroke="#bdbdbd" strokeWidth="1.800" /></svg>
          <Gap $w={24} /><svg width="14" height="11"><path d="M1 6l4 4 8-9" fill="none" stroke="#bdbdbd" strokeWidth="2.200" /></svg>
          <Gap $w={23} /><Fx>f<small>x</small></Fx>
        </Box>
        <Gap $w={3} />
        <Box><BoxEnd><Chevron /></BoxEnd></Box>
      </FormulaBar>
      <Worksheet />
      <SheetTabs>
        <SheetNav>
          <svg width="5" height="8"><path d="M5 0v8L0 4z" fill={GREEN} /></svg>
          <svg width="5" height="8"><path d="M0 0v8l5-4z" fill="#bbb" /></svg>
          <span>...</span>
        </SheetNav>
        <SheetTab $w={113}>Диаграмма1 "</SheetTab>
        <SheetTab $w={136} $trim={4}>Анализ данных1"</SheetTab>
        <SheetTab $w={67}$bare>2 кесте</SheetTab>
        <SheetTab $w={96} $on>3D" 3 кесте</SheetTab>
        <SheetTab $w={96} $trim={1}>Диаграмма</SheetTab>
        <SheetTab $w={123} $trim={1}>Анализ данных</SheetTab>
        <SheetTab $w={44} $trim={5}>3D</SheetTab>
        <TabCenter $w={184} $pl={33}><svg width="16" height="16"><circle cx="8" cy="8" r="7.300" fill="none" stroke="#888" /><path d="M4 8h8M8 4v8" stroke="#777" strokeWidth="2" /></svg></TabCenter>
        <TabCenter $w={17}><svg width="3" height="12"><path d="M1 1v10" stroke="#aaa" strokeWidth="2" strokeDasharray="2 2.500" /></svg></TabCenter>
        <HScroll>
          <ScrollKey><svg width="4" height="7"><path d="M4 0v7L0 3.500z" fill="#666" /></svg></ScrollKey>
          <HThumb /><Grow />
          <ScrollKey><svg width="4" height="7"><path d="M0 0v7l4-3.500z" fill="#666" /></svg></ScrollKey>
        </HScroll>
      </SheetTabs>
      <StatusBar>
        Готово<Grow />
        <ViewBtn $on $w={38}><svg width="13" height="13"><path d="M.5.5h12v12H.5zM.5 4.500h12M.5 8.500h12M4.500.5v12M8.500.5v12" fill="none" stroke="#666" /></svg></ViewBtn>
        <ViewBtn $w={38}><svg width="14" height="13"><path d="M.5.5h13v12H.5zM3.500 2.500h7v8h-7z" fill="none" stroke="#666" /><path d="M5 5h4M5 7h4M5 9h4" stroke="#666" /></svg></ViewBtn>
        <ViewBtn $w={38}><svg width="14" height="13"><path d="M.5.5h13v12H.5zM.5 8.500h9v-8M5 .5v8" fill="none" stroke="#666" /></svg></ViewBtn>
        <Gap $w={5} /><svg width="6" height="2"><path d="M0 1h6" stroke="#555" strokeWidth="2" /></svg>
        <Gap $w={4} /><svg width="100" height="11"><path d="M0 5.500h100M50.500 3v6" stroke="#a5a5a5" fill="none" /><rect x="22" width="5" height="11" fill="#555" /></svg>
        <Gap $w={4} /><svg width="7" height="7"><path d="M0 3.500h7M3.500 0v7" stroke="#555" strokeWidth="1.800" /></svg>
        <Gap $w={11} /><Percent>50%</Percent>
      </StatusBar>
      <TaskBar>
        <TaskBtn $w={48}><svg width="16" height="16" viewBox="0 0 16 16" fill="#fff"><path d="M0 2.300L6.700 1.400v6.200H0zM7.500 1.300L16 0v7.600H7.500zM0 8.400h6.700v6.200L0 13.700zM7.500 8.400H16V16l-8.500-1.300z" /></svg></TaskBtn>
        <Search>
          <svg width="17" height="17" viewBox="0 0 17 17"><circle cx="10.500" cy="6.500" r="5.300" fill="none" stroke="#222" strokeWidth="1.300" /><path d="M6.500 10.500L1 16" stroke="#222" strokeWidth="1.300" /></svg>
          <SearchWord>Поиск</SearchWord><SearchArt /><Gap $w={4} />
        </Search>
        <TaskBtn $w={48}><svg width="17" height="16" viewBox="0 0 17 16"><path d="M1 .5V3h9V.5M1 15.500V13h9v2.500M.5 5.500h10v5H.5z" fill="none" stroke="#fff" strokeWidth="1.200" /><path d="M14.500 0v16" stroke="#ccc" /><path d="M12.500 5h4v3h-4z" fill="#fff" /></svg></TaskBtn>
        <TaskBtn $w={53} $open><EdgeIcon /></TaskBtn>
        <TaskBtn $w={45} $open><FolderIcon /></TaskBtn>
        <TaskBtn $w={52}><StoreIcon /></TaskBtn>
        <TaskBtn $w={49}><svg width="24" height="19" viewBox="0 0 24 19"><path d="M0 6L12 0l12 6v13H0z" fill="#fff" /><path d="M1.500 6.500h21L14 11l4 5-9-5z" fill="#20363f" /></svg></TaskBtn>
        <TaskBtn $w={48} $active><ExcelIcon /></TaskBtn>
        <Gap $w={700} />
        <Tray>
          <svg width="24" height="16" viewBox="0 0 24 16"><path d="M1 1h19v14H1zM20 4h3v11h-3" fill="none" stroke="#fff" strokeWidth="1.600" /><path d="M4 4h13M12 7.500h5M12 9.500h5M12 12h5" stroke="#fff" strokeWidth="1.300" /><path d="M4.500 7.500h5v4.500h-5z" fill="none" stroke="#fff" strokeWidth="1.300" /></svg>
          <Gap $w={26} /><svg width="12" height="7"><path d="M.5 6.500L6 1l5.500 5.500" fill="none" stroke="#fff" strokeWidth="1.200" /></svg>
          <Gap $w={10} /><svg width="16" height="14" viewBox="0 0 16 14"><path d="M4 2.500h11.500v7H4.500M9.500 9.500v3.500M6 13h7M.5 1h4v4h-4zM2.500 5v8" fill="none" stroke="#fff" /></svg>
          <Gap $w={8} /><svg width="17" height="14" viewBox="0 0 17 14"><path d="M.5 5v4h2.500l3.500 3V2L3 5zM8.500 5q1.500 2 0 4M11 3q3 4 0 8M13.500 1.500q4.500 5.500 0 11" fill="none" stroke="#fff" /></svg>
          <Gap $w={10} />ENG<Gap $w={6} />
          <Clock>4:28 PM<br />4/22/2025</Clock>
          <Gap $w={11} />
          <Notice><svg width="17" height="17" viewBox="0 0 17 17"><path d="M0 0h17v13H8l-4 4v-4H0z" fill="#fff" /><path d="M3 4h11M3 6.500h11M3 9h8" stroke="#1a2740" /></svg><Badge>3</Badge></Notice>
        </Tray>
      </TaskBar>
    </Screen>
  );
}
